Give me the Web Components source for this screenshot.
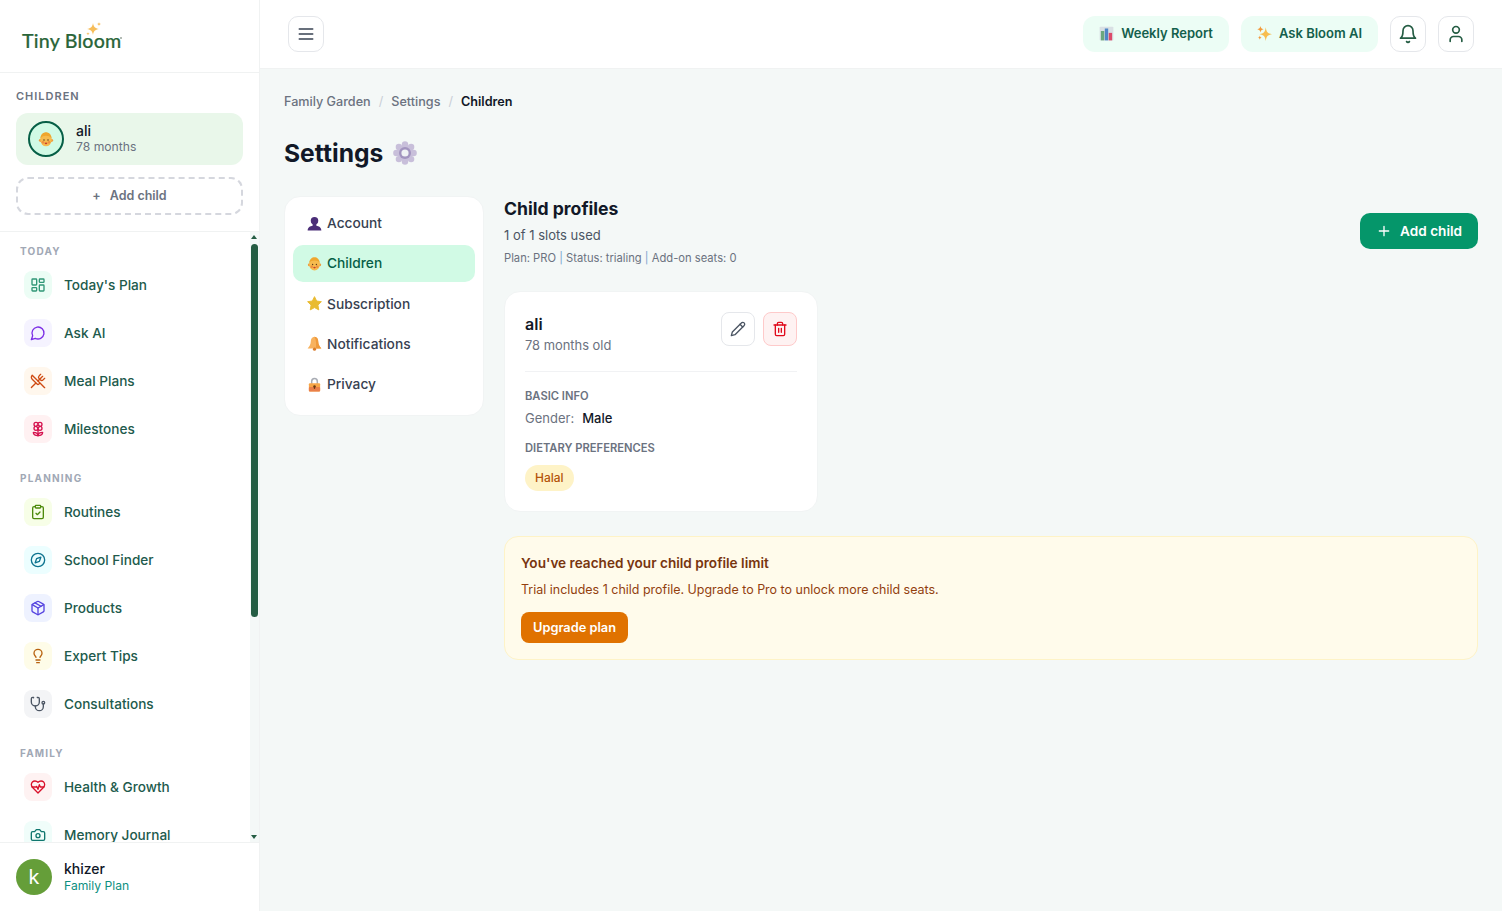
<!DOCTYPE html>
<html lang="en">
<head>
<meta charset="utf-8">
<title>Tiny Bloom - Settings</title>
<style>
    html, body { margin: 0; height: 100%; overflow: hidden; }
    body { font-family: Inter, "Liberation Sans", sans-serif; color: #111827; background: #f4f8f7; }
</style>
</head>
<body>
<app-shell></app-shell>

<script>
const ICONS = {
    menu: '<path d="M4 6h16M4 12h16M4 18h16"/>',
    bell: '<path d="M6 8a6 6 0 0 1 12 0c0 7 3 9 3 9H3s3-2 3-9"/><path d="M10.3 21a1.94 1.94 0 0 0 3.4 0"/>',
    user: '<path d="M19 21v-2a4 4 0 0 0-4-4H9a4 4 0 0 0-4 4v2"/><circle cx="12" cy="7" r="4"/>',
    plus: '<path d="M5 12h14M12 5v14"/>',
    pencil: '<path d="M17 3a2.85 2.83 0 1 1 4 4L7.5 20.5 2 22l1.5-5.5Z"/><path d="m15 5 4 4"/>',
    trash: '<path d="M3 6h18"/><path d="M19 6v14c0 1-1 2-2 2H7c-1 0-2-1-2-2V6"/><path d="M8 6V4c0-1 1-2 2-2h4c1 0 2 1 2 2v2"/><path d="M10 11v6M14 11v6"/>',
    dashboard: '<rect x="3" y="3" width="7" height="9" rx="1"/><rect x="14" y="3" width="7" height="5" rx="1"/><rect x="14" y="12" width="7" height="9" rx="1"/><rect x="3" y="16" width="7" height="5" rx="1"/>',
    chat: '<path d="M7.9 20A9 9 0 1 0 4 16.1L2 22Z"/>',
    utensils: '<path d="m16 2-2.3 2.3a3 3 0 0 0 0 4.2l1.8 1.8a3 3 0 0 0 4.2 0L22 8"/><path d="M15 15 3.3 3.3a4.2 4.2 0 0 0 0 6l7.3 7.3c.7.7 2 .7 2.8 0L15 15Zm0 0 7 7"/><path d="m2.1 21.8 6.4-6.3"/><path d="m19 5-7 7"/>',
    flower: '<path d="M12 5a3 3 0 1 1 3 3m-3-3a3 3 0 1 0-3 3m3-3v1M9 8a3 3 0 1 0 3 3M9 8h1m5 0a3 3 0 1 1-3 3m3-3h-1m-2 3v-1"/><circle cx="12" cy="8" r="2"/><path d="M12 10v12"/><path d="M12 22c4.2 0 7-1.667 7-5-4.2 0-7 1.667-7 5Z"/><path d="M12 22c-4.2 0-7-1.667-7-5 4.2 0 7 1.667 7 5Z"/>',
    clipboard: '<rect x="8" y="2" width="8" height="4" rx="1"/><path d="M16 4h2a2 2 0 0 1 2 2v14a2 2 0 0 1-2 2H6a2 2 0 0 1-2-2V6a2 2 0 0 1 2-2h2"/><path d="m9 14 2 2 4-4"/>',
    compass: '<circle cx="12" cy="12" r="10"/><path d="m16.24 7.76-2.12 6.36-6.36 2.12 2.12-6.36 6.36-2.12z"/>',
    box: '<path d="M21 8a2 2 0 0 0-1-1.73l-7-4a2 2 0 0 0-2 0l-7 4A2 2 0 0 0 3 8v8a2 2 0 0 0 1 1.73l7 4a2 2 0 0 0 2 0l7-4A2 2 0 0 0 21 16Z"/><path d="m3.3 7 8.7 5 8.7-5"/><path d="M12 22V12"/><path d="m7.5 4.27 9 5.15"/>',
    bulb: '<path d="M15 14c.2-1 .7-1.7 1.5-2.5 1-.9 1.5-2.2 1.5-3.5A6 6 0 0 0 6 8c0 1 .2 2.2 1.5 3.5.7.7 1.3 1.5 1.5 2.5"/><path d="M9 18h6"/><path d="M10 22h4"/>',
    stethoscope: '<path d="M4.8 2.3A.3.3 0 1 0 5 2H4a2 2 0 0 0-2 2v5a6 6 0 0 0 6 6 6 6 0 0 0 6-6V4a2 2 0 0 0-2-2h-1a.2.2 0 1 0 .3.3"/><path d="M8 15v1a6 6 0 0 0 6 6 6 6 0 0 0 6-6v-4"/><circle cx="20" cy="10" r="2"/>',
    heartPulse: '<path d="M19 14c1.49-1.46 3-3.21 3-5.5A5.5 5.5 0 0 0 16.5 3c-1.76 0-3 .5-4.5 2-1.5-1.5-2.74-2-4.5-2A5.5 5.5 0 0 0 2 8.5c0 2.3 1.5 4.05 3 5.5l7 7Z"/><path d="M3.22 12H9.5l.5-1 2 4.5 2-7 1.5 3.5h5.27"/>',
    camera: '<path d="M14.5 4h-5L7 7H4a2 2 0 0 0-2 2v9a2 2 0 0 0 2 2h16a2 2 0 0 0 2-2V9a2 2 0 0 0-2-2h-3l-2.5-3z"/><circle cx="12" cy="13" r="3"/>',
};

// emoji are drawn too, the sandbox has no colour emoji font to rely on
const GLYPHS = {
    baby: '<circle cx="3.800" cy="14" r="2.400" fill="#ef9a3c"/><circle cx="20.200" cy="14" r="2.400" fill="#ef9a3c"/><ellipse cx="12" cy="13.500" rx="8.500" ry="9.500" fill="#f6bb4e"/><path d="M3.500 11C4 5 8 2 12 2s8 3 8.500 9c-2.500-3-5-4-8.500-4s-6 1-8.500 4Z" fill="#efa62e"/><circle cx="7.500" cy="17" r="2" fill="#ee8f3e"/><circle cx="16.500" cy="17" r="2" fill="#ee8f3e"/><circle cx="9" cy="13.500" r="1.100" fill="#5b3a1c"/><circle cx="15" cy="13.500" r="1.100" fill="#5b3a1c"/><ellipse cx="12" cy="18.500" rx="2" ry="1.300" fill="#c8402a"/>',
    bust: '<circle cx="12" cy="7.500" r="6" fill="#4b2e78"/><path d="M9 11h6v4.400c3.800.8 8 2.400 8 7.600H1c0-5.200 4.200-6.800 8-7.600Z" fill="#4b2e78"/>',
    star: '<path d="m12 1 3.400 7 7.600 1.100-5.500 5.400 1.300 7.700L12 18.500 5.200 22.200l1.300-7.700L1 9.100 8.600 8Z" fill="#e9bb30" stroke="#e9bb30" stroke-width="1.500" stroke-linejoin="round"/>',
    bell: '<path d="M12 1c4 0 6 3.500 6 8 0 5 2.500 7 5 11H1c2.500-4 5-6 5-11 0-4.500 2-8 6-8Z" fill="#f8b25e"/><path d="M12 1c4 0 6 3.500 6 8 0 5 2.500 7 5 11h-9c1-7 1-13-2-19Z" fill="#ef9a3c"/><circle cx="12" cy="21" r="2.500" fill="#d97b29"/>',
    lock: '<path d="M7.500 11V7a4.500 4.500 0 0 1 9 0v4" fill="none" stroke="#a8acb4" stroke-width="2.400"/><rect x="3" y="10" width="18" height="13" rx="1.500" fill="#f7a648"/><rect x="3" y="16" width="18" height="7" rx="1.500" fill="#e97f4a"/><circle cx="12" cy="15" r="2" fill="#6b3a14"/><path d="M11 15h2v4h-2z" fill="#6b3a14"/>',
    gear: '<g fill="#c8bfda"><circle cx="12" cy="12" r="8"/><circle cx="12" cy="3.400" r="3.200"/><circle cx="12" cy="20.600" r="3.200"/><circle cx="3.400" cy="12" r="3.200"/><circle cx="20.600" cy="12" r="3.200"/><circle cx="5.900" cy="5.900" r="3.200"/><circle cx="18.100" cy="5.900" r="3.200"/><circle cx="5.900" cy="18.100" r="3.200"/><circle cx="18.100" cy="18.100" r="3.200"/></g><circle cx="12" cy="12" r="6" fill="#a294bf"/><circle cx="12" cy="12" r="3.600" fill="#f0f2f4"/>',
    chart: '<rect x="1" y="1" width="22" height="22" rx="1.500" fill="#d9e0e4"/><rect x="3" y="8" width="5.400" height="15" fill="#6ba77d"/><rect x="9.300" y="4" width="5.400" height="19" fill="#4f86c6"/><rect x="15.600" y="11" width="5.400" height="12" fill="#dc4b6a"/>',
    sparkles: '<path d="M14 2c1.200 8 3 10 10 11-7 1-8.800 3-10 11-1.200-8-3-10-10-11 7-1 8.800-3 10-11Z" fill="#f7bd4f"/><path d="M5.500 0c.7 3.500 1.700 4.500 5 5.200-3.300.7-4.300 1.700-5 5.200-.7-3.500-1.700-4.500-5-5.200 3.300-.7 4.300-1.700 5-5.200Z" fill="#f39a3c"/><path d="M4.500 15c.5 2.400 1.200 3 3.500 3.500-2.300.5-3 1.100-3.500 3.500-.5-2.400-1.200-3-3.500-3.500 2.300-.5 3-1.100 3.500-3.500Z" fill="#f39a3c"/>',
};

class LuIcon extends HTMLElement {
    constructor() {
        super();
        const size = this.getAttribute('size') || 20;
        const weight = this.getAttribute('weight') || 2;
        this.attachShadow({ mode: 'open' }).innerHTML = `
            <style>
                :host { display: inline-flex; flex: none; }
            </style>
            <svg width="${size}" height="${size}" viewBox="0 0 24 24" fill="none" stroke="currentColor"
                stroke-width="${weight}" stroke-linecap="round" stroke-linejoin="round">${ICONS[this.getAttribute('name')]}</svg>
        `;
    }
}
customElements.define('lu-icon', LuIcon);

class EmojiGlyph extends HTMLElement {
    constructor() {
        super();
        const size = this.getAttribute('size') || 14;
        this.attachShadow({ mode: 'open' }).innerHTML = `
            <style>
                :host { display: inline-flex; flex: none; }
            </style>
            <svg width="${size}" height="${size}" viewBox="0 0 24 24">${GLYPHS[this.getAttribute('name')]}</svg>
        `;
    }
}
customElements.define('emoji-glyph', EmojiGlyph);

const navTemplate = document.createElement('template');
navTemplate.innerHTML = `
    <style>
        :host { display: flex; align-items: center; gap: 12px; height: 44px; padding: 0 8px; font-size: 13.600px; font-weight: 500; color: #215a4c; }
        .tile { width: 28px; height: 28px; border-radius: 8px; display: flex; align-items: center; justify-content: center; background: var(--tile); color: var(--ink); }
    </style>
    <span class="tile"></span>
    <slot></slot>
`;

class NavItem extends HTMLElement {
    constructor() {
        super();
        this.attachShadow({ mode: 'open' }).appendChild(navTemplate.content.cloneNode(true));
    }

    connectedCallback() {
        const tile = this.shadowRoot.querySelector('.tile');
        tile.style.setProperty('--tile', this.getAttribute('tile'));
        tile.style.setProperty('--ink', this.getAttribute('ink'));
        tile.innerHTML = `<lu-icon size="16" name="${this.getAttribute('icon')}"></lu-icon>`;
    }
}
customElements.define('nav-item', NavItem);

const NAV_SECTIONS = [
    { title: 'Today', items: [
        ['Today\'s Plan', 'dashboard', '#ecfdf5', '#2f9676'],
        ['Ask AI', 'chat', '#f5f3ff', '#7c2ee6'],
        ['Meal Plans', 'utensils', '#fff7ed', '#cf4a12'],
        ['Milestones', 'flower', '#fff1f2', '#d5134f'],
    ] },
    { title: 'Planning', items: [
        ['Routines', 'clipboard', '#f7fee7', '#4d8a0c'],
        ['School Finder', 'compass', '#ecfeff', '#0e7490'],
        ['Products', 'box', '#eef2ff', '#5544e0'],
        ['Expert Tips', 'bulb', '#fefce8', '#b8620f'],
        ['Consultations', 'stethoscope', '#f3f4f6', '#4b5563'],
    ] },
    { title: 'Family', items: [
        ['Health & Growth', 'heartPulse', '#fef2f2', '#d9102a'],
        ['Memory Journal', 'camera', '#f0fdfa', '#0f766e'],
    ] },
];

class SideNav extends HTMLElement {
    constructor() {
        super();
        const sections = NAV_SECTIONS.map((section) => `
            <section>
                <h3>${section.title}</h3>
                <div class="items">
                    ${section.items.map(([label, icon, tile, ink]) => `
                        <nav-item icon="${icon}" tile="${tile}" ink="${ink}">${label.replace('&', '&amp;')}</nav-item>
                    `).join('')}
                </div>
            </section>
        `).join('');
        this.attachShadow({ mode: 'open' }).innerHTML = `
            <style>
                :host { display: block; position: relative; flex: 1; min-height: 0; overflow: hidden; }
                .wrap { padding: 11px 0 0; display: flex; flex-direction: column; gap: 19px; }
                h3 { margin: 0 0 4px 20px; font-size: 10px; line-height: 16px; font-weight: 700; letter-spacing: 1.200px; text-transform: uppercase; color: #a1a8b5; }
                .items { display: flex; flex-direction: column; gap: 4px; padding: 0 16px; }
                /* headless chrome hides real scrollbars, so the rail is drawn */
                .rail { position: absolute; top: 0; bottom: 0; right: 0; width: 9px; background: #f4f8f7; }
                .thumb { position: absolute; left: 1px; top: 12px; width: 7px; height: 373px; border-radius: 4px; background: #245c43; }
                .up, .down { position: absolute; left: 1px; width: 0; height: 0; border-left: 3.500px solid transparent; border-right: 3.500px solid transparent; }
                .up { top: 3px; border-bottom: 4px solid #245c43; }
                .down { bottom: 3px; border-top: 4px solid #245c43; }
            </style>
            <div class="wrap">${sections}</div>
            <div class="rail"><i class="up"></i><i class="thumb"></i><i class="down"></i></div>
        `;
    }
}
customElements.define('side-nav', SideNav);

class SideBar extends HTMLElement {
    constructor() {
        super();
        this.attachShadow({ mode: 'open' }).innerHTML = `
            <style>
                :host { display: flex; flex-direction: column; flex: none; width: 260px; height: 100%; box-sizing: border-box; background: #fff; border-right: 1px solid #f0f2f2; }
                .brand { height: 73px; flex: none; box-sizing: border-box; border-bottom: 1px solid #f0f2f2; padding: 28px 0 0 22px; }
                .logo { position: relative; display: inline-block; font-family: Lato, sans-serif; font-size: 19.600px; line-height: 26px; font-weight: 500; letter-spacing: .2px; color: #2a6539; -webkit-text-stroke: .2px #2a6539; }
                .logo svg { position: absolute; left: 64px; top: -6px; }
                .logo i { position: absolute; right: -1px; top: 9px; width: 2px; height: 2px; border-radius: 50%; background: #9aa59d; }
                .kids { flex: none; padding: 15px 16px 16px; border-bottom: 1px solid #f0f2f2; }
                .kids h3 { margin: 0 0 9px; font-size: 11px; line-height: 16px; font-weight: 600; letter-spacing: 1px; color: #6b7280; }
                .kid { display: flex; align-items: center; gap: 12px; height: 52px; padding: 0 12px; box-sizing: border-box; border-radius: 12px; background: #e9f7ea; }
                .who { padding-bottom: 2px; }
                .face { width: 36px; height: 36px; box-sizing: border-box; border: 2px solid #065f46; border-radius: 50%; background: #d1fae5; display: flex; align-items: center; justify-content: center; }
                .name { font-size: 14px; line-height: 16px; font-weight: 500; color: #111827; }
                .age { font-size: 12.160px; line-height: 15px; color: #6b7280; }
                .add { margin-top: 12px; height: 38px; box-sizing: border-box; border: 2px dashed #d5d7de; border-radius: 12px; padding-bottom: 1px; display: flex; align-items: center; justify-content: center; gap: 9px; font-size: 12.500px; font-weight: 600; color: #6b7280; }
                .me { flex: none; display: flex; align-items: center; gap: 12px; height: 69px; padding: 0 16px; box-sizing: border-box; border-top: 1px solid #f0f2f2; background: #fff; }
                .avatar { width: 36px; height: 36px; border-radius: 50%; background: #659e39; color: #fff; font-size: 20px; display: flex; align-items: center; justify-content: center; }
                .user { font-size: 14px; line-height: 16px; font-weight: 500; color: #111827; }
                .plan { margin-top: 1px; font-size: 12.160px; line-height: 15px; color: #0d8f7f; }
            </style>
            <div class="brand">
                <span class="logo">Tiny Bloom<i></i>
                    <svg width="16" height="15" viewBox="0 0 16 15"><path d="M7 1c.7 4 2 5.300 6 6-4 .7-5.300 2-6 6-.7-4-2-5.300-6-6 4-.7 5.300-2 6-6Z" fill="#f6bd5a"/><path d="M13 0c.3 1.400.7 1.800 2.100 2.100-1.400.3-1.800.7-2.100 2.100-.3-1.400-.7-1.800-2.100-2.100C12.300 1.800 12.700 1.400 13 0Z" fill="#f6bd5a"/><path d="M2 10c.2 1.100.6 1.500 1.700 1.700-1.100.2-1.500.6-1.700 1.700-.2-1.100-.6-1.500-1.700-1.700 1.100-.2 1.500-.6 1.700-1.700Z" fill="#f6bd5a"/></svg>
                </span>
            </div>
            <div class="kids">
                <h3>CHILDREN</h3>
                <div class="kid">
                    <span class="face"><emoji-glyph name="baby" size="16"></emoji-glyph></span>
                    <div class="who">
                        <div class="name">ali</div>
                        <div class="age">78 months</div>
                    </div>
                </div>
                <div class="add"><span>+</span><span>Add child</span></div>
            </div>
            <side-nav></side-nav>
            <div class="me">
                <span class="avatar">k</span>
                <div>
                    <div class="user">khizer</div>
                    <div class="plan">Family Plan</div>
                </div>
            </div>
        `;
    }
}
customElements.define('side-bar', SideBar);

class TopBar extends HTMLElement {
    constructor() {
        super();
        this.attachShadow({ mode: 'open' }).innerHTML = `
            <style>
                :host { display: flex; align-items: center; flex: none; height: 69px; box-sizing: border-box; padding: 0 28px; gap: 12px; background: #fff; border-bottom: 1px solid #f0f2f2; }
                .square { width: 36px; height: 36px; box-sizing: border-box; border: 1px solid #e5e7eb; border-radius: 10px; display: flex; align-items: center; justify-content: center; color: #245c43; background: #fff; }
                .menu { margin-right: auto; color: #374151; }
                .pill { height: 36px; padding: 0 16px 2px; box-sizing: border-box; border-radius: 12px; background: #ecfdf5; display: flex; align-items: center; gap: 7px; font-size: 13px; font-weight: 600; color: #14604c; }
            </style>
            <span class="square menu"><lu-icon name="menu" size="20"></lu-icon></span>
            <span class="pill"><emoji-glyph name="chart" size="15"></emoji-glyph>Weekly Report</span>
            <span class="pill"><emoji-glyph name="sparkles" size="15"></emoji-glyph>Ask Bloom AI</span>
            <span class="square"><lu-icon name="bell" size="20"></lu-icon></span>
            <span class="square"><lu-icon name="user" size="20"></lu-icon></span>
        `;
    }
}
customElements.define('top-bar', TopBar);

class SettingsMenu extends HTMLElement {
    constructor() {
        super();
        const rows = [
            ['Account', 'bust'],
            ['Children', 'baby', true],
            ['Subscription', 'star'],
            ['Notifications', 'bell'],
            ['Privacy', 'lock'],
        ];
        this.attachShadow({ mode: 'open' }).innerHTML = `
            <style>
                :host { display: block; width: 200px; flex: none; box-sizing: border-box; align-self: flex-start; padding: 8px 8px 12px; background: #fff; border: 1px solid #f1f4f4; border-radius: 16px; }
                .rows { display: flex; flex-direction: column; gap: 3.250px; }
                .row { display: flex; align-items: center; gap: 5px; height: 37px; padding: 0 14px .6px; box-sizing: border-box; border-radius: 10px; font-size: 13.760px; font-weight: 500; color: #374151; }
                .on { background: #d1fae5; color: #065f46; }
            </style>
            <div class="rows">
                ${rows.map(([label, glyph, on]) => `
                    <div class="row ${on ? 'on' : ''}"><emoji-glyph name="${glyph}" size="15"></emoji-glyph>${label}</div>
                `).join('')}
            </div>
        `;
    }
}
customElements.define('settings-menu', SettingsMenu);

class ChildCard extends HTMLElement {
    constructor() {
        super();
        this.attachShadow({ mode: 'open' }).innerHTML = `
            <style>
                :host { display: block; width: 314px; box-sizing: border-box; padding: 20px; background: #fff; border: 1px solid #f1f4f4; border-radius: 16px; }
                .head { display: flex; justify-content: space-between; padding-bottom: 16px; border-bottom: 1px solid #f1f2f4; }
                .name { font-size: 16px; line-height: 24px; font-weight: 600; color: #111827; }
                .age { margin-top: 1px; font-size: 12.900px; line-height: 18px; color: #6b7280; }
                .actions { display: flex; gap: 8px; }
                .act { width: 34px; height: 34px; box-sizing: border-box; border-radius: 8px; border: 1px solid #e5e7eb; display: flex; align-items: center; justify-content: center; color: #4b5563; background: #fff; }
                .del { background: #fef2f2; border-color: #fecaca; color: #e00b1c; }
                h4 { margin: 0 0 4px; font-size: 11.200px; line-height: 16px; font-weight: 600; text-transform: uppercase; color: #6b7280; }
                h4.first { margin-top: 16px; }
                h4.next { margin: 12px 0 9px; }
                .field { display: flex; gap: 8px; font-size: 13px; line-height: 20px; color: #6b7280; }
                .field b { font-weight: 500; color: #111827; }
                .tag { display: inline-flex; align-items: center; height: 26px; padding: 0 10px 1px; box-sizing: border-box; border-radius: 13px; background: #fef3c7; font-size: 12px; font-weight: 500; color: #b45309; vertical-align: top; }
            </style>
            <div class="head">
                <div>
                    <div class="name">ali</div>
                    <div class="age">78 months old</div>
                </div>
                <div class="actions">
                    <span class="act"><lu-icon name="pencil" size="16"></lu-icon></span>
                    <span class="act del"><lu-icon name="trash" size="16"></lu-icon></span>
                </div>
            </div>
            <h4 class="first">Basic info</h4>
            <div class="field"><span>Gender:</span><b>Male</b></div>
            <h4 class="next">Dietary preferences</h4>
            <span class="tag">Halal</span>
        `;
    }
}
customElements.define('child-card', ChildCard);

class LimitNotice extends HTMLElement {
    constructor() {
        super();
        this.attachShadow({ mode: 'open' }).innerHTML = `
            <style>
                :host { display: block; margin-top: 24px; padding: 16px; background: #fffbeb; border: 1px solid #fef3c7; border-radius: 14px; }
                .title { font-size: 13.600px; line-height: 20px; font-weight: 600; color: #78350f; }
                .text { margin-top: 8px; font-size: 12.480px; line-height: 18px; color: #92400e; }
                .btn { display: inline-flex; align-items: center; height: 31px; margin-top: 13px; padding: 0 12px; border-radius: 8px; background: #e07200; color: #fff; font-size: 12.800px; font-weight: 600; vertical-align: top; }
            </style>
            <div class="title">You've reached your child profile limit</div>
            <div class="text">Trial includes 1 child profile. Upgrade to Pro to unlock more child seats.</div>
            <span class="btn">Upgrade plan</span>
        `;
    }
}
customElements.define('limit-notice', LimitNotice);

class SettingsPage extends HTMLElement {
    constructor() {
        super();
        this.attachShadow({ mode: 'open' }).innerHTML = `
            <style>
                :host { display: block; flex: 1; min-height: 0; padding: 24px 24px 0; background: #f4f8f7; overflow: hidden; }
                .crumbs { display: flex; gap: 8px; font-size: 12.640px; line-height: 17px; font-weight: 500; color: #6b7280; }
                .crumbs i { font-style: normal; font-weight: 400; color: #c9ced6; }
                .crumbs b { font-weight: 600; color: #111827; }
                h1 { display: flex; align-items: center; gap: 10px; margin: 26px 0 26px; font-size: 24.640px; line-height: 34px; font-weight: 700; color: #111827; }
                .body { display: flex; gap: 20px; }
                .content { flex: 1; min-width: 0; padding-top: 1px; }
                .top { display: flex; justify-content: space-between; align-items: center; height: 68px; margin-bottom: 26px; }
                h2 { margin: 0; font-size: 17.600px; line-height: 24px; font-weight: 700; color: #111827; }
                .used { margin-top: 4px; font-size: 13px; line-height: 20px; color: #4b5563; }
                .meta { margin-top: 5px; font-size: 11.200px; line-height: 16px; color: #6b7280; }
                .meta i { font-style: normal; color: #7ba4cf; }
                .add { display: flex; align-items: center; gap: 8px; height: 36px; padding: 0 16px; border-radius: 10px; background: #05966a; color: #fff; font-size: 13.600px; font-weight: 600; }
            </style>
            <div class="crumbs"><span>Family Garden</span><i>/</i><span>Settings</span><i>/</i><b>Children</b></div>
            <h1>Settings <emoji-glyph name="gear" size="24"></emoji-glyph></h1>
            <div class="body">
                <settings-menu></settings-menu>
                <div class="content">
                    <div class="top">
                        <div>
                            <h2>Child profiles</h2>
                            <div class="used">1 of 1 slots used</div>
                            <div class="meta">Plan: PRO <i>|</i> Status: trialing <i>|</i> Add-on seats: 0</div>
                        </div>
                        <span class="add"><lu-icon name="plus" size="16"></lu-icon>Add child</span>
                    </div>
                    <child-card></child-card>
                    <limit-notice></limit-notice>
                </div>
            </div>
        `;
    }
}
customElements.define('settings-page', SettingsPage);

class AppShell extends HTMLElement {
    constructor() {
        super();
        this.attachShadow({ mode: 'open' }).innerHTML = `
            <style>
                :host { display: flex; height: 100vh; }
                .main { flex: 1; min-width: 0; display: flex; flex-direction: column; }
            </style>
            <side-bar></side-bar>
            <div class="main">
                <top-bar></top-bar>
                <settings-page></settings-page>
            </div>
        `;
    }
}
customElements.define('app-shell', AppShell);
</script>
</body>
</html>
